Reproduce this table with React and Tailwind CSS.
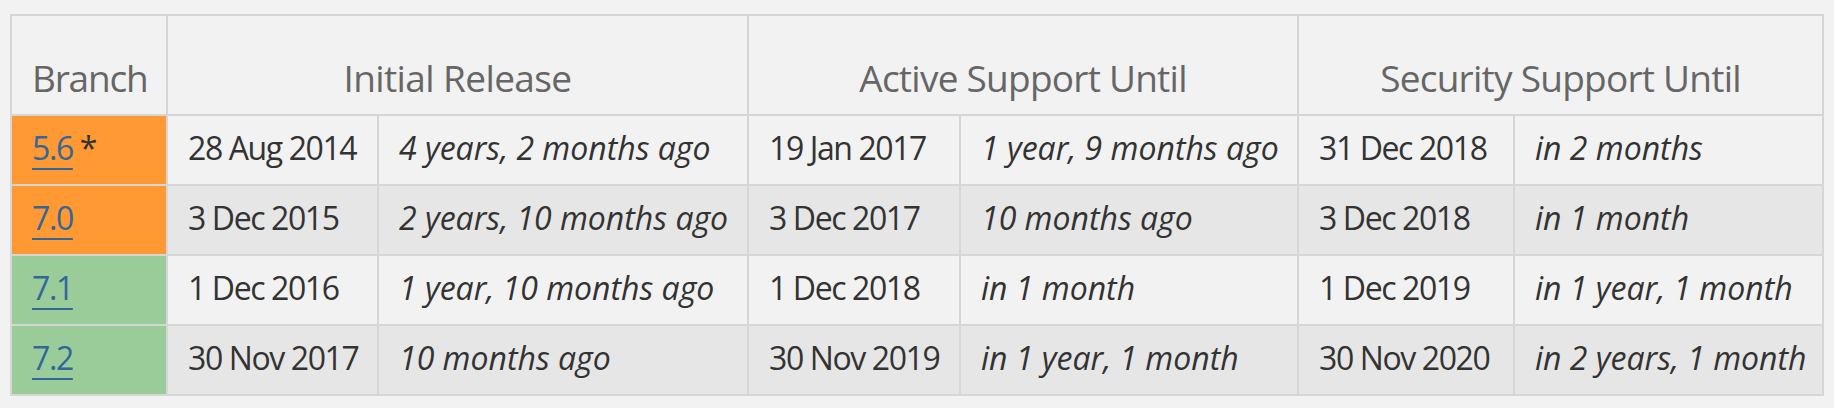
import React from "react";

const rows = [
  { v: "5.6", star: true, color: "bg-[#ff9933]", bg: "bg-[#f2f2f2]", cells: ["28 Aug 2014", "4 years, 2 months ago", "19 Jan 2017", "1 year, 9 months ago", "31 Dec 2018", "in 2 months"] },
  { v: "7.0", color: "bg-[#ff9933]", bg: "bg-[#e6e6e6]", cells: ["3 Dec 2015", "2 years, 10 months ago", "3 Dec 2017", "10 months ago", "3 Dec 2018", "in 1 month"] },
  { v: "7.1", color: "bg-[#99cc99]", bg: "bg-[#f2f2f2]", cells: ["1 Dec 2016", "1 year, 10 months ago", "1 Dec 2018", "in 1 month", "1 Dec 2019", "in 1 year, 1 month"] },
  { v: "7.2", color: "bg-[#99cc99]", bg: "bg-[#e6e6e6]", cells: ["30 Nov 2017", "10 months ago", "30 Nov 2019", "in 1 year, 1 month", "30 Nov 2020", "in 2 years, 1 month"] },
];

export default function App() {
  return (
    <div className="h-[408px] w-[1834px] bg-[#f2f2f2] pt-[14px] pl-[10px] font-['Open_Sans',sans-serif]">
      <div className="grid w-max grid-cols-[154px_209px_368px_210px_336px_214px_307px] grid-rows-[98px_68px_68px_68px_68px] gap-[2px] bg-[#d6d6d6] p-[2px]">
        <div className="flex items-end bg-[#f2f2f2] pb-[14px] pl-[20px] text-[37px] leading-[44px] tracking-[-1.2px] text-[#666666]">Branch</div>
        <div className="col-span-2 flex items-end justify-center bg-[#f2f2f2] pb-[14px] text-[37px] leading-[44px] tracking-[-0.6px] text-[#666666]">Initial Release</div>
        <div className="col-span-2 flex items-end justify-center bg-[#f2f2f2] pb-[14px] text-[37px] leading-[44px] tracking-[-0.75px] text-[#666666]">Active Support Until</div>
        <div className="col-span-2 flex items-end justify-center bg-[#f2f2f2] pb-[14px] text-[37px] leading-[44px] tracking-[-0.75px] text-[#666666]">Security Support Until</div>
        {rows.map((r) => (
          <React.Fragment key={r.v}>
            <div className={`${r.color} whitespace-nowrap pb-[4px] pl-[20px] text-[32px] leading-[64px] tracking-[-1.4px] text-[#333333]`}>
              <a href="#" className="text-[#336699] underline decoration-[2px] underline-offset-[8px]">{r.v}</a>
              {r.star ? " *" : ""}
            </div>
            {r.cells.map((c, i) => (
              <div
                key={i}
                className={`${r.bg} whitespace-nowrap pb-[4px] pl-[20px] text-[32px] leading-[64px] text-[#333333] ${i % 2 === 1 ? "italic" : "tracking-[-1.4px]"}`}
              >
                {c}
              </div>
            ))}
          </React.Fragment>
        ))}
      </div>
    </div>
  );
}
